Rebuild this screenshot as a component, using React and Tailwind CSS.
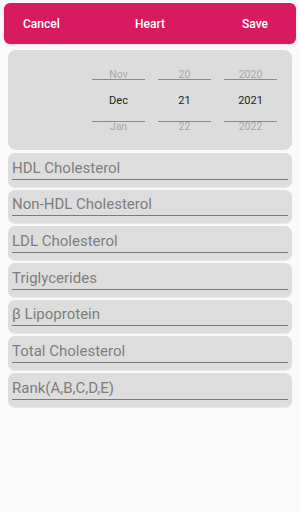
import React from "react";

const fields = [
  "HDL Cholesterol",
  "Non-HDL Cholesterol",
  "LDL Cholesterol",
  "Triglycerides",
  "β Lipoprotein",
  "Total Cholesterol",
  "Rank(A,B,C,D,E)",
];

function Col({ prev, cur, next }) {
  return (
    <div className="w-[53px] flex flex-col items-center">
      <div className="mt-[20px] h-[10px] leading-[10px] text-[10.5px] text-[#a8a8a8]">{prev}</div>
      <div className="-mt-[1px] h-[1px] w-full bg-[#8a8a8a]"></div>
      <div className="h-[41px] flex items-center justify-center text-[11px] text-[#222] pt-[1px]">{cur}</div>
      <div className="h-[1px] w-full bg-[#8a8a8a]"></div>
      <div className="h-[10px] leading-[10px] text-[10.5px] text-[#a8a8a8]">{next}</div>
    </div>
  );
}

export default function App() {
  return (
    <div className="w-[300px] h-[512px] bg-[#fafafa] overflow-hidden" style={{ fontFamily: "Roboto, 'Liberation Sans', sans-serif" }}>
      <div className="pt-[3px] px-[4px]">
        <div className="h-[41px] rounded-[6px] bg-[#d81b60] flex items-center text-white text-[12px] font-medium shadow-sm">
          <div className="w-[88px] pl-[19px]">Cancel</div>
          <div className="flex-1 text-center">Heart</div>
          <div className="w-[88px] pl-[34px]">Save</div>
        </div>
      </div>
      <div className="px-[8px] pt-[6px]">
        <div className="h-[100px] rounded-[8px] bg-[#dcdcdc] flex pl-[84px] gap-[13px]">
          <Col prev="Nov" cur="Dec" next="Jan" />
          <Col prev="20" cur="21" next="22" />
          <Col prev="2020" cur="2021" next="2022" />
        </div>
        <div className="flex flex-col gap-[3.2px] pt-[3px]">
          {fields.map((f) => (
            <div key={f} className="h-[33.5px] rounded-[7px] bg-[#dddddd] px-[4px] shadow-[0_1px_1px_rgba(0,0,0,0.08)]">
              <div className="h-[26.5px] border-b border-[#7a7a7a] flex items-end pb-[3px] text-[15px] leading-none text-[#7d7d7d]">
                {f}
              </div>
            </div>
          ))}
        </div>
      </div>
    </div>
  );
}
